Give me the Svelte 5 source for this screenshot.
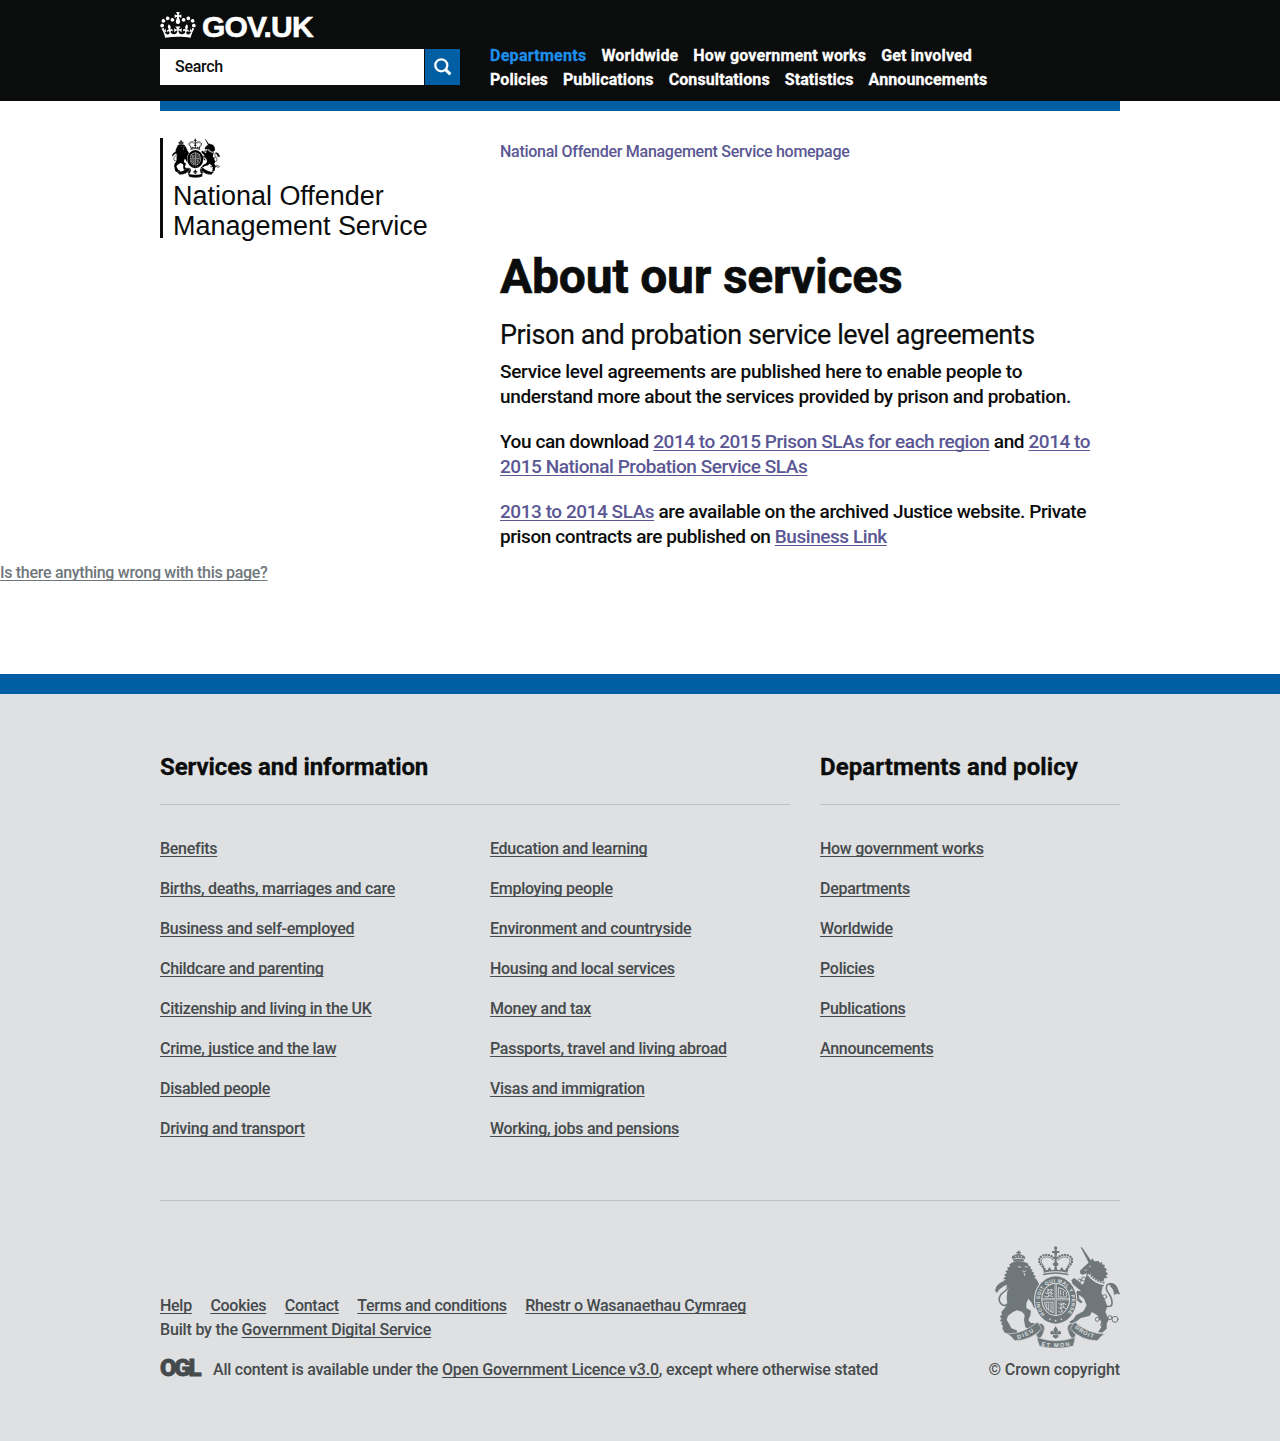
<script>
  const navRows = [
    ['Departments', 'Worldwide', 'How government works', 'Get involved'],
    ['Policies', 'Publications', 'Consultations', 'Statistics', 'Announcements']
  ];
  const services = [
    'Benefits', 'Births, deaths, marriages and care', 'Business and self-employed', 'Childcare and parenting',
    'Citizenship and living in the UK', 'Crime, justice and the law', 'Disabled people', 'Driving and transport',
    'Education and learning', 'Employing people', 'Environment and countryside', 'Housing and local services',
    'Money and tax', 'Passports, travel and living abroad', 'Visas and immigration', 'Working, jobs and pensions'
  ];
  const policy = ['How government works', 'Departments', 'Worldwide', 'Policies', 'Publications', 'Announcements'];
  const meta = ['Help', 'Cookies', 'Contact', 'Terms and conditions', 'Rhestr o Wasanaethau Cymraeg'];
</script>

{#snippet arms(mottoes, bg)}
  <g fill="currentColor">
    <!-- lion -->
    <path d="M83 32h6v4h4v4h-4v3q11 1 17 8l-5 13q-14-4-30 0l-6-13q5-8 18-8v-3h-4v-4h4z" />
    <path d="M71 65q15-4 30 0l12 5 3 7 7 4-3 4 8 5-4 3 9 6-4 4 9 6-5 3 8 8 8 16-6 12-4 16 4 14 7 12-2 14-8 4-9-6-6-14-10-12-6 14 0 14 14 8-2 14-6 14 6 8 14 2 9 8-2 8-24 3-12-8-4-20 2-16-8-10-16-4-12 6-14 10-4 12 8 14 6 12 16 6 3 8-22 6-18-8-6-12 2-8-7-6 5-3-8-8 6-2-6-10 7-2-2-10 12-14 6-14-2-14 2-20 6-14-10 4 4-9-10 2 6-9-9-1 8-8-8-4 9-5-6-6 9-4-5-7 9-3-4-7 9-3-2-7z" />
    <!-- crown over the shield -->
    <circle cx="197" cy="24" r="5" /><path d="M194 28h6v5h8v6h-7v7h-8v-7h-7v-6h8z" />
    <path d="M157 80l5 18q35-8 70 0l5-18-10 5 0 6-6-1-5-9-7 9-7 0-3-13h5v-6h-14v6h5l-3 13-7 0-7-9-5 9-6 1 0-6z" />
    <path d="M159 101q38-9 76 0v5q-38-9-76 0z" />
    <path d="M194 46h6v20l6 6-5 5h-8l-5-5 6-6z" />
    <!-- unicorn -->
    <path d="M272 22l4 0 30 44-8 6z" />
    <path d="M303 62l4-7 6 9 14-1 0 5 10-1-1 6 9 2-3 7 9 6-4 6 7 8-6 4 4 8-9 1-2 8-8 0L338 140 334 158 346 182 352 200 346 216 356 238 350 252 350 266 336 278 324 276 334 262 334 246 322 226 306 216 298 228 272 234 262 242 244 252 238 246 250 238 258 226 280 214 290 196 282 176 272 168 266 164 268 176 278 186 272 190 260 180 256 162 262 152 274 154 262 144 248 132 244 120 254 114 264 124 278 134 286 120 290 100 278 104 271 101 270 92 282 80z" />
  </g>
  <g fill="none" stroke="currentColor" stroke-linecap="round" stroke-linejoin="round">
    <path d="M66 174Q50 204 36 194Q20 180 34 162Q60 144 60 130Q54 118 42 124" stroke-width="4.500" />
    <path d="M17 152Q18 136 34 128Q44 122 48 128Q48 134 40 138Q28 144 21 156z" fill="currentColor" stroke-width="3" />
    <path d="M344 196Q368 206 366 186Q366 174 356 160Q344 144 352 134Q360 128 368 134" stroke-width="4.500" />
    <path d="M360 130Q378 130 382 146L388 162Q378 156 374 164Q374 148 362 138z" fill="currentColor" stroke-width="3" />
    <path d="M158 80Q138 60 156 48Q176 38 194 56M236 80Q256 60 238 48Q218 38 200 56" stroke-width="7" stroke-dasharray="0.5 8" />
    <path d="M162 80Q146 62 160 53Q176 46 190 60M232 80Q248 62 234 53Q218 46 204 60" stroke-width="2.500" />
    <g stroke-width="3">
      <circle cx="281" cy="117" r="6" /><circle cx="269" cy="122" r="5" /><circle cx="344" cy="170" r="6" />
      <circle cx="322" cy="216" r="5" /><circle cx="322" cy="238" r="6" /><circle cx="338" cy="254" r="6" />
      <circle cx="347" cy="240" r="6" /><circle cx="360" cy="233" r="6" /><circle cx="375" cy="238" r="9" />
    </g>
    <path d="M294 103Q314 128 342 132" stroke={bg} stroke-width="12" stroke-linecap="butt" />
    <path d="M292 108Q312 134 340 137" stroke-width="4" /><path d="M298 101Q316 123 342 128" stroke-width="6" stroke-dasharray="0.5 8" />
  </g>
  <!-- faces -->
  <g fill="none" stroke={bg} stroke-width="2.500">
    <path d="M70 57q16-4 32 0M84 80l10 2M104 80l9 1M97 92l6 3 6-3M100 99l5 3-2 6M298 78l5 2M284 92l6-3" />
    <path d="M74 47l6 5M86 46v6M98 47l-6 5" />
  </g>
  <!-- garter and shield -->
  <ellipse cx="197" cy="180" rx="65" ry="74" fill={bg} />
  <ellipse cx="197" cy="180" rx="62" ry="71" fill="currentColor" />
  <ellipse cx="197" cy="178" rx="43" ry="50" fill={bg} />
  <ellipse cx="197" cy="178" rx="40" ry="47" fill="currentColor" />
  <path d="M197 131V226M157 178H237" stroke={bg} stroke-width="6" />
  <path d="M197 131V226M157 178H237" stroke="currentColor" stroke-width="2" />
  <g fill="none" stroke={bg} stroke-width="2.500">
    <path d="M171 147l5 4 8-3 6 3M165 157l6 4 9-4 9 4M163 168l7 3 9-4 10 3M176 147l-3 8 4 9-4 8M185 149l-3 8 3 9" />
    <path d="M205 190l6 4 9-4 9 4M205 202l6 4 9-4 8 4M205 214l6 3 8-4M212 187l3 8-3 9 4 9M222 188l-3 8 4 8" />
    <path d="M205 143l14 4 10 10v14h-24zM212 150v16M220 153v14" />
    <path d="M163 187h26v31q-22-8-26-31M170 190v18M176 190v22M183 190v25" />
  </g>
  {#if mottoes}
    <path id="garter" d="M165 223A48 55 0 1 1 229 223" fill="none" />
    <text class="motto ring"><textPath href="#garter" textLength="246">HONI SOIT QUI MAL Y PENSE</textPath></text>
  {/if}
  <circle cx="180" cy="238" r="2.500" fill={bg} /><circle cx="197" cy="242" r="2.500" fill={bg} /><circle cx="214" cy="238" r="2.500" fill={bg} />
  <!-- motto ribbon -->
  <g fill="currentColor" stroke={bg} stroke-width="2">
    <path d="M132 252Q164 244 164 266Q160 288 146 300L138 284Q154 270 146 264z" />
    <path d="M264 252Q232 244 232 266Q236 288 250 300L258 284Q242 270 250 264z" />
    <path d="M52 282Q104 280 142 246L156 266Q122 302 74 302Q68 292 52 282z" />
    <path d="M344 282Q292 280 254 246L240 266Q274 302 322 302Q328 292 344 282z" />
    <path d="M140 292Q197 312 256 292L250 318Q197 332 148 318z" />
  </g>
  <path d="M197 258l7 12-4 9q10-13 13-1 0 9-9 4l2 8-9 6-9-6 2-8q-9 5-9-4 3-12 13 1l-4-9z" fill="currentColor" />
  <path d="M188 284h18" stroke={bg} stroke-width="2" />
  {#if mottoes}
    <path id="dieu" d="M83 297Q116 289 143 266" fill="none" />
    <path id="mon" d="M154 317Q197 327 246 316" fill="none" />
    <path id="droit" d="M254 263Q280 288 318 297" fill="none" />
    <text class="motto"><textPath href="#dieu" textLength="54">DIEU</textPath></text>
    <text class="motto"><textPath href="#mon" textLength="86">ET MON</textPath></text>
    <text class="motto"><textPath href="#droit" textLength="64">DROIT</textPath></text>
  {/if}
{/snippet}

<header class="masthead">
  <div class="wrap head-row">
    <div class="brand">
      <a class="logo" href="#home">
        <svg class="crown" viewBox="0 0 132 97" aria-hidden="true">
          <path fill="#fff" d="M25 30.2c3.5 1.5 7.7-.2 9.1-3.7 1.5-3.6-.2-7.8-3.9-9.2-3.6-1.4-7.6.3-9.1 3.9-1.4 3.5.3 7.5 3.9 9zM9 39.5c3.6 1.5 7.8-.2 9.2-3.7 1.5-3.6-.2-7.8-3.9-9.1-3.6-1.5-7.6.2-9.1 3.8-1.4 3.5.3 7.5 3.8 9zM4.4 57.2c3.5 1.5 7.7-.2 9.1-3.8 1.5-3.6-.2-7.7-3.9-9.1-3.5-1.5-7.6.3-9.1 3.8-1.4 3.5.3 7.6 3.9 9.1zm38.3-21.4c3.5 1.5 7.7-.2 9.1-3.8 1.5-3.6-.2-7.7-3.9-9.1-3.6-1.5-7.6.3-9.1 3.8-1.3 3.6.4 7.7 3.9 9.1zm64.4-5.6c-3.6 1.5-7.8-.2-9.1-3.7-1.5-3.6.2-7.8 3.8-9.2 3.6-1.4 7.7.3 9.2 3.9 1.3 3.5-.4 7.5-3.9 9zm15.9 9.3c-3.6 1.5-7.7-.2-9.1-3.7-1.5-3.6.2-7.8 3.7-9.1 3.6-1.5 7.7.2 9.2 3.8 1.5 3.5-.3 7.5-3.8 9zm4.7 17.7c-3.6 1.5-7.8-.2-9.2-3.8-1.5-3.6.2-7.7 3.9-9.1 3.6-1.5 7.7.3 9.2 3.8 1.3 3.5-.4 7.6-3.9 9.1zM89.3 35.8c-3.6 1.5-7.8-.2-9.2-3.8-1.4-3.6.2-7.7 3.9-9.1 3.6-1.5 7.7.3 9.2 3.8 1.4 3.6-.3 7.7-3.9 9.1zM69.7 17.7l8.9 4.7V9.3l-8.9 2.8c-.2-.3-.5-.6-.9-.9L72.4 0H59.6l3.5 11.2c-.3.3-.6.5-.9.9l-8.8-2.8v13.1l8.8-4.7c.3.3.6.7.9.9l-5 15.4v.1c-.2.8-.4 1.6-.4 2.4 0 4.1 3.1 7.5 7 8.1h.2c.3 0 .7.1 1 .1.4 0 .7 0 1-.1h.2c4-.6 7.1-4.1 7.1-8.1 0-.8-.1-1.7-.4-2.4V34l-5.1-15.4c.4-.2.7-.6 1-.9zM66 92.8c16.9 0 32.8 1.1 47.1 3.2 4-16.9 8.9-26.7 14-33.5l-9.6-3.4c1 4.9 1.1 7.2 0 10.2-1.5-1.4-3-4.3-4.2-8.7L108.6 76c2.8-2 5-3.2 7.5-3.3-4.4 9.4-10 11.9-13.6 11.2-4.3-.8-6.3-4.6-5.6-7.9 1-4.7 5.7-5.9 8-.5 4.3-8.7-3-11.4-7.6-8.8 7.1-7.2 7.9-13.5 2.1-21.1-8 6.1-8.1 12.3-4.5 20.8-4.7-5.4-12.1-2.5-9.5 6.2 3.4-5.2 7.9-2 7.2 3.1-.6 4.3-6.4 7.8-13.5 7.2-10.3-.9-10.9-8-11.2-13.8 2.5-.5 7.1 1.8 11 7.3L80.2 60c-4.1 4.4-8 5.3-12.3 5.4 1.4-4.4 8-11.6 8-11.6H55.5s6.4 7.2 7.9 11.6c-4.2-.1-8-1-12.3-5.4l1.4 16.4c3.9-5.5 8.5-7.7 10.9-7.3-.3 5.8-.9 12.8-11.1 13.8-7.2.6-12.9-2.9-13.5-7.2-.7-5 3.8-8.3 7.1-3.1 2.7-8.7-4.6-11.6-9.4-6.2 3.7-8.5 3.6-14.7-4.6-20.8-5.8 7.6-5 13.9 2.2 21.1-4.7-2.6-11.9.1-7.7 8.8 2.3-5.5 7.1-4.2 8.1.5.7 3.3-1.3 7.1-5.7 7.9-3.5.7-9-1.8-13.5-11.2 2.5.1 4.7 1.3 7.5 3.3l-4.7-15.4c-1.2 4.4-2.7 7.2-4.3 8.7-1.1-3-.9-5.3 0-10.2l-9.5 3.4c5 6.9 9.9 16.7 14 33.5 14.8-2.1 30.8-3.2 47.7-3.2z" />
        </svg>
        <span>GOV.UK</span>
      </a>
      <form class="search" onsubmit={(e) => e.preventDefault()}>
        <input type="text" placeholder="Search" aria-label="Search" />
        <button aria-label="Submit search">
          <svg viewBox="0 0 18 18"><circle cx="7.3" cy="7.3" r="6" fill="none" stroke="#fff" stroke-width="2.3" /><path d="M11.4 11.4l5 5" stroke="#fff" stroke-width="3" /></svg>
        </button>
      </form>
    </div>
    <nav>
      {#each navRows as row, r}
        <div class="nav-row">
          {#each row as item, i}
            <a href="#nav" class:active={r === 0 && i === 0}>{item}</a>
          {/each}
        </div>
      {/each}
    </nav>
  </div>
</header>

<main>
  <div class="wrap bar"></div>
  <div class="wrap page">
    <div class="org">
      <svg class="crest" viewBox="15 18 375 306" aria-hidden="true">{@render arms(false, '#fff')}</svg>
      <span>National Offender<br />Management Service</span>
    </div>
    <article>
      <a class="home" href="#org">National Offender Management Service homepage</a>
      <h1>About our services</h1>
      <h2>Prison and probation service level agreements</h2>
      <p><span class="lead">Service level agreements are published here to enable people to</span><br />understand more about the services provided by prison and probation.</p>
      <p>You can download <a href="#a">2014 to 2015 Prison SLAs for each region</a> and <a href="#b">2014 to<br />2015 National Probation Service SLAs</a></p>
      <p><a href="#c">2013 to 2014 SLAs</a> are available on the archived Justice website. Private<br />prison contracts are published on <a href="#d">Business Link</a></p>
    </article>
  </div>
  <a class="report" href="#report">Is there anything wrong with this page?</a>
</main>

<footer>
  <div class="wrap">
    <div class="cats">
      <section class="wide">
        <h3>Services and information</h3>
        <ul>{#each services as s}<li><a href="#s">{s}</a></li>{/each}</ul>
      </section>
      <section>
        <h3>Departments and policy</h3>
        <ul>{#each policy as s}<li><a href="#p">{s}</a></li>{/each}</ul>
      </section>
    </div>
    <div class="meta">
      <div>
        <div class="links">{#each meta as m}<a href="#m">{m}</a>{/each}</div>
        <div class="built">Built by the <a href="#gds">Government Digital Service</a></div>
        <div class="licence">
          <span class="ogl">OGL</span>
          <span>All content is available under the <a href="#ogl">Open Government Licence v3.0</a>, except where otherwise stated</span>
        </div>
      </div>
      <div class="copyright">
        <svg viewBox="15 18 375 306" aria-hidden="true">{@render arms(true, '#dee0e2')}</svg>
        <a href="#crown">© Crown copyright</a>
      </div>
    </div>
  </div>
</footer>

<style>
  :global(body) {
    margin: 0;
    background: #fff;
    color: #0b0c0c;
    font: 500 16px/20px Roboto, 'Liberation Sans', sans-serif;
    letter-spacing: -0.28px;
  }
  a { color: inherit; text-underline-offset: 1.5px; text-decoration-thickness: 1px; text-decoration-skip-ink: none; }
  h1, h2, h3, p, ul { margin: 0; padding: 0; }
  ul { list-style: none; }
  .wrap { width: 960px; margin: 0 auto; }

  .masthead { background: #0b0c0c; height: 101px; }
  .head-row { display: flex; gap: 30px; }
  .brand { width: 300px; padding-top: 12px; }
  .logo { display: flex; gap: 6px; height: 37px; color: #fff; text-decoration: none; }
  .logo span { font: bold 30px/29px 'Liberation Sans', Arial, sans-serif; letter-spacing: -0.8px; -webkit-text-stroke: 0.6px; }
  .crown { width: 36px; height: 26px; }
  .search { display: flex; gap: 1px; height: 36px; }
  input { flex: 1; min-width: 0; box-sizing: border-box; border: 0; padding: 0 15px; font: inherit; letter-spacing: inherit; background: #fff; }
  input::placeholder { color: #0b0c0c; opacity: 1; }
  button { width: 35px; border: 0; padding: 0; background: #005ea5; display: grid; place-items: center; }
  button svg { width: 18px; height: 18px; }
  nav { padding-top: 44px; }
  .nav-row { display: flex; gap: 15px; height: 24px; line-height: 24px; letter-spacing: 0.15px; }
  .nav-row + .nav-row { letter-spacing: 0.1px; }
  .nav-row a { color: #fff; font-weight: 700; text-decoration: none; -webkit-text-stroke: 0.3px; }
  .nav-row a.active { color: #1d8feb; letter-spacing: 0.28px; }

  main { height: 573px; }
  .bar { height: 10px; background: #005ea5; }
  .page { display: flex; justify-content: space-between; height: 452px; }
  .org { margin-top: 27px; height: 100px; box-sizing: border-box; border-left: 3px solid #0b0c0c; padding-left: 9px; display: flex; flex-direction: column; }
  .crest { width: 48px; height: 40px; flex: none; color: #000; }
  .org span { font: 27px/30px 'Liberation Sans', Arial, sans-serif; margin-top: 3px; letter-spacing: -0.02px; padding-left: 1px; }
  article { width: 620px; font-size: 19px; line-height: 25px; }
  .home { display: block; padding-top: 31px; font-size: 16px; line-height: 20px; text-decoration: none; color: #5a5794; }
  h1 { font-size: 48px; line-height: 50px; font-weight: 700; letter-spacing: -0.2px; margin-top: 90px; -webkit-text-stroke: 0.6px; }
  h2 { font-size: 27px; line-height: 35px; font-weight: 400; letter-spacing: -0.42px; margin-top: 16px; -webkit-text-stroke: 0.2px; }
  article p { margin: 6px 0 20px; letter-spacing: -0.35px; }
  article p + p { margin-top: 0; letter-spacing: -0.4px; }
  article p a { color: #5a5794; letter-spacing: -0.45px; }
  .lead { letter-spacing: -0.3px; }
  .report { color: #6f777b; letter-spacing: -0.3px; }

  footer { border-top: 20px solid #005ea5; background: #dee0e2; height: 747px; color: #454a4c; }
  .cats { display: flex; gap: 30px; padding-top: 60px; height: 446px; border-bottom: 1px solid #bfc1c3; }
  section { width: 300px; }
  section.wide { width: 630px; }
  h3 { font-size: 24px; line-height: 26px; padding-bottom: 24px; border-bottom: 1px solid #bfc1c3; color: #0b0c0c; letter-spacing: 0.08px; -webkit-text-stroke: 0.3px; }
  .wide h3 { letter-spacing: -0.1px; }
  section ul { padding-top: 34px; }
  .wide ul { columns: 2; column-gap: 30px; }
  li { height: 40px; break-inside: avoid; }
  .meta { display: flex; justify-content: space-between; padding-top: 45px; }
  .links { display: flex; gap: 18.5px; padding-top: 48px; line-height: 24px; }
  .built { line-height: 24px; letter-spacing: -0.18px; }
  .licence { display: flex; padding-top: 18px; gap: 12px; letter-spacing: -0.22px; }
  .ogl { width: 41px; font-weight: 900; font-size: 24px; line-height: 16px; letter-spacing: -2.2px; -webkit-text-stroke: 0.8px; }
  .copyright { display: flex; flex-direction: column; align-items: flex-end; gap: 12px; }
  .copyright svg { width: 125px; height: 102px; color: #6f777b; }
  .copyright a { text-decoration: none; letter-spacing: -0.12px; }
  .motto { font: bold 17px 'Liberation Sans', Arial, sans-serif; fill: #dee0e2; letter-spacing: 0; }
  .ring { font-size: 15px; }
</style>
